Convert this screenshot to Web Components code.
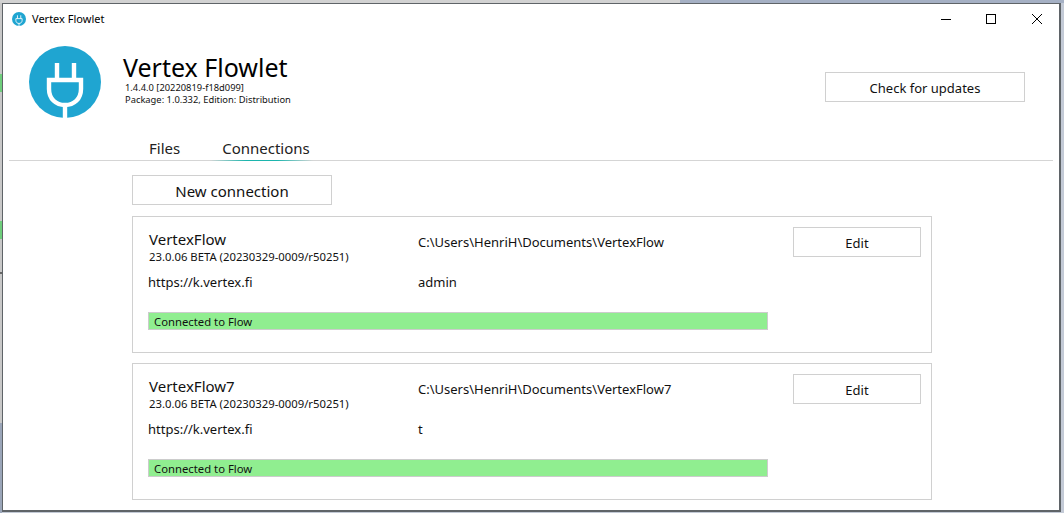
<!DOCTYPE html>
<html>
<head>
<meta charset="utf-8">
<title>Vertex Flowlet</title>
<style>
    html, body { margin: 0; height: 100%; }
    body {
        overflow: hidden;
        font-family: "Noto Sans", "Open Sans", sans-serif;
        color: #111;
        /* what shows of the desktop round the window */
        background:
            linear-gradient(90deg, #d2d2d2 0 680px, #a5b0c4 680px) top / 100% 3px no-repeat,
            linear-gradient(#c8c8c8 0 74px, #6fce7c 74px 92px, #c8c8c8 92px 221px, #6fce7c 221px 239px, #c8c8c8 239px 272px, #666 272px 274px, #c8c8c8 274px 423px, #9aa5b8 423px) left / 2px 100% no-repeat,
            #c3cad6;
    }
</style>
</head>
<body>
<vf-window>
    <vf-titlebar slot="title">Vertex Flowlet</vf-titlebar>
    <vf-header slot="header" name="Vertex Flowlet" version="1.4.4.0 [20220819-f18d099]" package="Package: 1.0.332, Edition: Distribution"></vf-header>
    <vf-tabs slot="tabs" items="Files,Connections" active="Connections"></vf-tabs>
    <vf-button wide class="new">New connection</vf-button>
    <vf-connection name="VertexFlow" build="23.0.06 BETA (20230329-0009/r50251)" url="https://k.vertex.fi" path="C:\Users\HenriH\Documents\VertexFlow" user="admin" status="Connected to Flow"></vf-connection>
    <vf-connection name="VertexFlow7" build="23.0.06 BETA (20230329-0009/r50251)" url="https://k.vertex.fi" path="C:\Users\HenriH\Documents\VertexFlow7" user="t" status="Connected to Flow"></vf-connection>
</vf-window>

<script>
const PLUG = `
    <circle cx="36" cy="36" r="36" fill="#1fa5d1"/>
    <g fill="none" stroke="#fff" stroke-width="4.4">
        <path d="M28 17V33M45 17V33"/>
        <path d="M20 34H52V43C52 53 45 59 36 59C27 59 20 53 20 43Z"/>
        <path d="M36 59V72"/>
    </g>`;

class VfWindow extends HTMLElement {
    constructor() {
        super();
        this.attachShadow({ mode: "open" });
        this.shadowRoot.innerHTML = `
            <style>
                :host {
                    display: block;
                    box-sizing: border-box;
                    width: 1059px;
                    height: 509px;
                    margin: 3px 0 0 2px;
                    background: #fff;
                    border: 1px solid #5f6468;
                    border-width: 1px 2px 2px 1px;
                    overflow: hidden;
                }
                main {
                    display: flex;
                    flex-direction: column;
                    gap: 10px;
                    align-items: flex-start;
                    padding: 14px 0 0 129px;
                }
                ::slotted(.new) { margin-bottom: 1px; }
            </style>
            <slot name="title"></slot>
            <slot name="header"></slot>
            <slot name="tabs"></slot>
            <main><slot></slot></main>
        `;
    }
}

class VfTitlebar extends HTMLElement {
    constructor() {
        super();
        this.attachShadow({ mode: "open" });
        this.shadowRoot.innerHTML = `
            <style>
                :host {
                    display: flex;
                    align-items: center;
                    height: 29px;
                    font-size: 11px;
                    color: #000;
                    padding-left: 9px;
                }
                svg.app { margin-right: 6px; }
                span { flex: 1; }
                .ctl { display: flex; margin-right: -1px; }
                .ctl svg { width: 46px; height: 29px; display: block; }
            </style>
            <svg class="app" width="14" height="14" viewBox="0 0 72 72">${PLUG}</svg>
            <span><slot></slot></span>
            <div class="ctl">
                <svg viewBox="0 0 46 29"><path d="M19 15.5H29" stroke="#000" fill="none"/></svg>
                <svg viewBox="0 0 46 29"><rect x="18.5" y="10.5" width="9" height="9" stroke="#000" fill="none"/></svg>
                <svg viewBox="0 0 46 29"><path d="M18 10L28 20M28 10L18 20" stroke="#000" fill="none"/></svg>
            </div>
        `;
    }
}

class VfHeader extends HTMLElement {
    constructor() {
        super();
        this.attachShadow({ mode: "open" });
        this.shadowRoot.innerHTML = `
            <style>
                :host {
                    display: flex;
                    align-items: flex-start;
                    height: 81px;
                    padding: 13px 34px 0 26px;
                    box-sizing: border-box;
                }
                svg { flex: none; margin-right: 22px; }
                .text { flex: 1; }
                h1 {
                    font-size: 25px;
                    font-weight: 400;
                    line-height: 26px;
                    margin: 8px 0 2px;
                    color: #000;
                }
                p { margin: 0 0 0 2px; font-size: 9.35px; line-height: 12px; }
                vf-button { margin-top: 26px; }
            </style>
            <svg width="72" height="72" viewBox="0 0 72 72">${PLUG}</svg>
            <div class="text">
                <h1>${this.getAttribute("name")}</h1>
                <p>${this.getAttribute("version")}</p>
                <p>${this.getAttribute("package")}</p>
            </div>
            <vf-button wide small>Check for updates</vf-button>
        `;
    }
}

class VfTabs extends HTMLElement {
    constructor() {
        super();
        this.attachShadow({ mode: "open" });
        const active = this.getAttribute("active");
        const tabs = this.getAttribute("items").split(",").map(t =>
            `<a class="${t === active ? "on" : ""}">${t}</a>`).join("");
        this.shadowRoot.innerHTML = `
            <style>
                :host {
                    display: flex;
                    gap: 42px;
                    margin: 19px 6px 0 6px;
                    padding-left: 140px;
                    height: 28px;
                    box-sizing: border-box;
                    border-bottom: 1px solid #d5d5d5;
                    font-size: 15px;
                }
                a {
                    position: relative;
                    line-height: 30px;
                    color: #222;
                }
                a.on::after {
                    content: "";
                    position: absolute;
                    left: -12px;
                    right: -3px;
                    bottom: -1px;
                    height: 1px;
                    background: linear-gradient(90deg, transparent, #1cb5ad 35%, #1cb5ad 65%, transparent);
                }
            </style>
            ${tabs}
        `;
    }
}

class VfButton extends HTMLElement {
    constructor() {
        super();
        this.attachShadow({ mode: "open" });
        this.shadowRoot.innerHTML = `
            <style>
                :host {
                    display: flex;
                    align-items: center;
                    justify-content: center;
                    box-sizing: border-box;
                    flex: none;
                    width: 128px;
                    height: 30px;
                    padding-top: 2px;
                    border: 1px solid #d0d0d0;
                    background: #fff;
                    font-size: 13px;
                    color: #111;
                }
                :host([wide]) { width: 200px; font-size: 15px; }
                :host([small]) { font-size: 13px; }
            </style>
            <slot></slot>
        `;
    }
}

class VfConnection extends HTMLElement {
    constructor() {
        super();
        this.attachShadow({ mode: "open" });
        const a = n => this.getAttribute(n);
        this.shadowRoot.innerHTML = `
            <style>
                :host {
                    display: grid;
                    grid-template-columns: 270px 375px 128px;
                    grid-template-rows: 45px 31px auto;
                    box-sizing: border-box;
                    width: 800px;
                    height: 137px;
                    padding: 10px 10px 0 15px;
                    border: 1px solid #d0d0d0;
                    font-size: 13px;
                    color: #111;
                }
                .name { font-size: 15px; line-height: 20px; padding: 2px 0 0 1px; }
                .build { font-size: 11.3px; line-height: 14px; padding: 1px 0 0 1px; }
                .path { padding-top: 5px; line-height: 20px; }
                .url, .user { line-height: 20px; align-self: start; }
                .url { grid-column: 1; }
                .user { grid-column: 2 / 4; }
                .bar {
                    grid-column: 1 / 4;
                    box-sizing: border-box;
                    width: 620px;
                    height: 18px;
                    margin-top: 9px;
                    padding-left: 5px;
                    background: #90ee90;
                    border: 1px solid #ccc;
                    font-size: 11.3px;
                    line-height: 17px;
                }
            </style>
            <div>
                <div class="name">${a("name")}</div>
                <div class="build">${a("build")}</div>
            </div>
            <div class="path">${a("path")}</div>
            <vf-button>Edit</vf-button>
            <div class="url">${a("url")}</div>
            <div class="user">${a("user")}</div>
            <div class="bar">${a("status")}</div>
        `;
    }
}

customElements.define("vf-window", VfWindow);
customElements.define("vf-titlebar", VfTitlebar);
customElements.define("vf-header", VfHeader);
customElements.define("vf-tabs", VfTabs);
customElements.define("vf-button", VfButton);
customElements.define("vf-connection", VfConnection);
</script>
</body>
</html>
